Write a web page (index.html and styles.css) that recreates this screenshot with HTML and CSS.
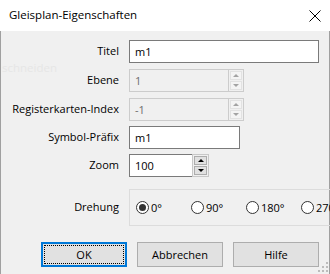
FILE: index.html
```html
<!DOCTYPE html>
<html>
<head>
<meta charset="utf-8">
<link rel="stylesheet" href="styles.css">
</head>
<body>
<div class="win">
  <div class="titlebar">
    <span class="title">Gleisplan-Eigenschaften</span>
    <svg class="close" width="12" height="12" viewBox="0 0 12 12"><path d="M0.5 0.5 L11.5 11.5 M11.5 0.5 L0.5 11.5" stroke="#000" stroke-width="1" fill="none"/></svg>
  </div>
  <div class="body">
    <span class="ghost">schneiden</span>
    <div class="form">
      <div class="lbl">Titel</div>
      <div class="cell"><div class="edit w-title">m1</div></div>

      <div class="lbl">Ebene</div>
      <div class="cell">
        <div class="spin disabled w-spin">
          <div class="spin-text">1</div>
          <div class="spin-btns">
            <div class="sbtn"><span class="arr up"></span></div>
            <div class="sbtn"><span class="arr down"></span></div>
          </div>
        </div>
      </div>

      <div class="lbl">Registerkarten-Index</div>
      <div class="cell">
        <div class="spin disabled w-spin">
          <div class="spin-text">-1</div>
          <div class="spin-btns">
            <div class="sbtn"><span class="arr up"></span></div>
            <div class="sbtn"><span class="arr down"></span></div>
          </div>
        </div>
      </div>

      <div class="lbl">Symbol-Präfix</div>
      <div class="cell"><div class="edit w-sym">m1</div></div>

      <div class="lbl">Zoom</div>
      <div class="cell">
        <div class="spin active w-zoom">
          <div class="spin-text">100</div>
          <div class="spin-btns">
            <div class="sbtn"><span class="arr up"></span></div>
            <div class="sbtn"><span class="arr down"></span></div>
          </div>
        </div>
      </div>

      <div class="lbl lbl-group">Drehung</div>
      <div class="cell">
        <div class="group">
          <div class="radio"><span class="circle checked"></span><span>0°</span></div>
          <div class="radio"><span class="circle"></span><span>90°</span></div>
          <div class="radio"><span class="circle"></span><span>180°</span></div>
          <div class="radio"><span class="circle"></span><span>270°</span></div>
        </div>
      </div>
    </div>
    <div class="buttons">
      <div class="btn default"><span class="focus">OK</span></div>
      <div class="btn">Abbrechen</div>
      <div class="btn">Hilfe</div>
    </div>
    <svg class="grip" width="10" height="10" viewBox="0 0 10 10">
      <rect x="8" y="0" width="2" height="2" fill="#bcbcbc"/>
      <rect x="4" y="4" width="2" height="2" fill="#bcbcbc"/>
      <rect x="8" y="4" width="2" height="2" fill="#bcbcbc"/>
      <rect x="0" y="8" width="2" height="2" fill="#bcbcbc"/>
      <rect x="4" y="8" width="2" height="2" fill="#bcbcbc"/>
      <rect x="8" y="8" width="2" height="2" fill="#bcbcbc"/>
    </svg>
  </div>
</div>
</body>
</html>
```

FILE: styles.css
```css
* { box-sizing: border-box; }
html, body { margin: 0; padding: 0; }
body {
  font-family: "Open Sans", "Noto Sans", sans-serif;
  font-size: 11px;
  color: #000;
  background: #f0f0f0;
}
.win {
  width: 330px;
  height: 274px;
  overflow: hidden;
  display: flex;
  flex-direction: column;
  background: #f0f0f0;
}
.titlebar {
  height: 31px;
  flex: none;
  background: #fff;
  display: flex;
  align-items: center;
  justify-content: space-between;
  padding: 0 9px 0 9px;
}
.title {
  font-size: 11.5px;
  position: relative;
  top: -1px;
}
.close { position: relative; top: 0; }
.body {
  flex: 1;
  position: relative;
  border-left: 1px solid #a0a0a0;
  border-right: 1px solid #a0a0a0;
  padding-top: 9px;
}
.ghost {
  position: absolute;
  left: 1px;
  top: 30px;
  color: #e6e6e6;
  font-size: 11.5px;
  line-height: 14px;
}
.form {
  display: grid;
  grid-template-columns: 118px 1fr;
  grid-template-rows: 29px 29px 28px 28px 35px 37px;
  column-gap: 10px;
  position: relative;
}
.lbl {
  text-align: right;
  height: 23px;
  line-height: 22px;
  white-space: nowrap;
}
.lbl-group { line-height: 36px; height: 37px; }
.cell { min-width: 0; }
.edit {
  height: 23px;
  border: 1px solid #7a7a7a;
  background: #fff;
  padding: 0 5px;
  line-height: 21px;
}
.w-title { width: 190px; }
.w-sym { width: 111px; }
.spin { display: flex; height: 23px; }
.w-spin { width: 115px; }
.w-zoom { width: 80px; }
.spin-text {
  flex: 1;
  padding: 0 5px;
  line-height: 21px;
}
.spin.disabled .spin-text {
  border: 1px solid #cccccc;
  border-right: none;
  background: #f0f0f0;
  color: #6d6d6d;
}
.spin.disabled .spin-btns {
  width: 16px;
  border: 1px solid #cccccc;
  display: flex;
  flex-direction: column;
  gap: 1px;
  padding: 1px;
  background: #f0f0f0;
}
.spin.disabled .sbtn {
  flex: 1;
  background: #f4f4f4;
  border: 1px solid #e2e2e2;
  display: flex;
  align-items: center;
  justify-content: center;
}
.spin.disabled .arr.up { border-bottom-color: #a3a3a3; }
.spin.disabled .arr.down { border-top-color: #a3a3a3; }
.spin.active .spin-text {
  border: 1px solid #7a7a7a;
  border-right: none;
  background: #fff;
}
.spin.active .spin-btns {
  width: 17px;
  border: 1px solid #c8c8c8;
  display: flex;
  flex-direction: column;
  gap: 1px;
  padding: 1px;
  background: #f0f0f0;
}
.spin.active .sbtn {
  flex: 1;
  background: #e1e1e1;
  border: 1px solid #adadad;
  display: flex;
  align-items: center;
  justify-content: center;
}
.arr { width: 0; height: 0; border-left: 3px solid transparent; border-right: 3px solid transparent; }
.arr.up { border-bottom: 3px solid #000; }
.arr.down { border-top: 3px solid #000; }
.group {
  height: 37px;
  width: 220px;
  border: 1px solid #dcdcdc;
  display: flex;
  align-items: center;
  padding-left: 6px;
}
.radio {
  width: 55px;
  flex: none;
  display: flex;
  align-items: center;
  gap: 2px;
  white-space: nowrap;
}
.circle {
  width: 13px;
  height: 13px;
  border-radius: 50%;
  border: 1px solid #333;
  background: #fff;
  flex: none;
  display: flex;
  align-items: center;
  justify-content: center;
}
.circle.checked::after {
  content: "";
  width: 7px;
  height: 7px;
  border-radius: 50%;
  background: #333;
}
.buttons {
  display: flex;
  gap: 10px;
  padding-left: 40px;
  margin-top: 16px;
}
.btn {
  width: 86px;
  height: 25px;
  background: #e1e1e1;
  border: 1px solid #adadad;
  display: flex;
  align-items: center;
  justify-content: center;
}
.btn.default {
  border: 2px solid #0078d7;
  padding: 1px;
}
.btn .focus {
  flex: 1;
  align-self: stretch;
  border: 1px dotted #000;
  display: flex;
  align-items: center;
  justify-content: center;
}
.grip {
  position: absolute;
  right: 1px;
  bottom: 2px;
}
```
